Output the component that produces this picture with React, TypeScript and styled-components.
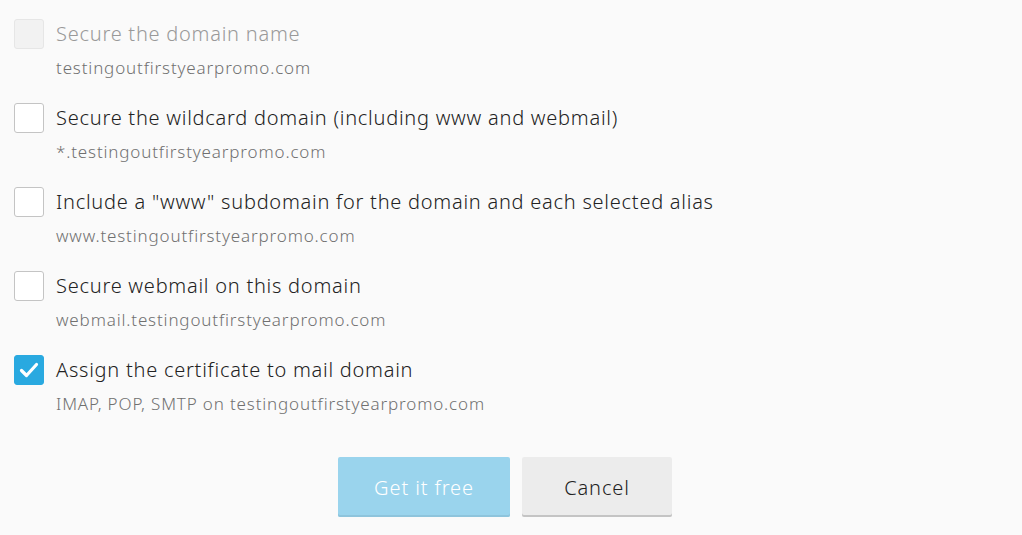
import React from "react";
import styled, { createGlobalStyle } from "styled-components";

const GlobalStyle = createGlobalStyle`
  html, body {
    margin: 0;
    padding: 0;
    background: #fafafa;
    font-family: "Noto Sans", "Open Sans", sans-serif;
  }
`;

const options = [
  {
    title: "Secure the domain name",
    hint: "testingoutfirstyearpromo.com",
    disabled: true,
    checked: false,
  },
  {
    title: "Secure the wildcard domain (including www and webmail)",
    hint: "*.testingoutfirstyearpromo.com",
    checked: false,
  },
  {
    title: 'Include a "www" subdomain for the domain and each selected alias',
    hint: "www.testingoutfirstyearpromo.com",
    checked: false,
  },
  {
    title: "Secure webmail on this domain",
    hint: "webmail.testingoutfirstyearpromo.com",
    checked: false,
  },
  {
    title: "Assign the certificate to mail domain",
    hint: "IMAP, POP, SMTP on testingoutfirstyearpromo.com",
    checked: true,
  },
];

export default function App() {
  return (
    <>
      <GlobalStyle />
      <Form>
        <List>
          {options.map((o) => (
            <Option key={o.title}>
              <Box $checked={o.checked} $disabled={o.disabled}>
                {o.checked && (
                  <svg width="22" height="18" viewBox="0 0 22 18">
                    <path
                      d="M3.5 9.5 L8.5 14.5 L18.5 3.5"
                      fill="none"
                      stroke="#fff"
                      strokeWidth="3.2"
                      strokeLinecap="round"
                      strokeLinejoin="round"
                    />
                  </svg>
                )}
              </Box>
              <Texts>
                <Title $disabled={o.disabled}>{o.title}</Title>
                <Hint>{o.hint}</Hint>
              </Texts>
            </Option>
          ))}
        </List>
        <Buttons>
          <Button $primary disabled>
            Get it free
          </Button>
          <Button>Cancel</Button>
        </Buttons>
      </Form>
    </>
  );
}

const Form = styled.div`
  padding: 19px 26px 0 14px;
`;

const List = styled.div`
  display: flex;
  flex-direction: column;
  gap: 23px;
`;

const Option = styled.label`
  display: grid;
  grid-template-columns: 30px 1fr;
  column-gap: 12px;
  align-items: start;
`;

const Box = styled.span<{ $checked?: boolean; $disabled?: boolean }>`
  box-sizing: border-box;
  width: 30px;
  height: 30px;
  border-radius: 3px;
  display: flex;
  align-items: center;
  justify-content: center;
  border: 1px solid
    ${(p) => (p.$checked ? "#29a9e0" : p.$disabled ? "#e6e6e6" : "#c4c4c4")};
  background: ${(p) =>
    p.$checked ? "#29a9e0" : p.$disabled ? "#f2f2f2" : "#fff"};
`;

const Texts = styled.div`
  display: flex;
  flex-direction: column;
  gap: 7px;
`;

const Title = styled.div<{ $disabled?: boolean }>`
  font-size: 20px;
  font-weight: 300;
  letter-spacing: 0.75px;
  line-height: 30px;
  color: ${(p) => (p.$disabled ? "#999" : "#222")};
`;

const Hint = styled.div`
  font-size: 17px;
  font-weight: 300;
  letter-spacing: 0.85px;
  line-height: 24px;
  color: #707070;
`;

const Buttons = styled.div`
  display: flex;
  justify-content: center;
  gap: 12px;
  margin-top: 41px;
`;

const Button = styled.button<{ $primary?: boolean }>`
  box-sizing: border-box;
  height: 60px;
  padding: 0 0;
  width: ${(p) => (p.$primary ? "172px" : "150px")};
  border: none;
  border-radius: 2px;
  font-family: inherit;
  font-size: 20px;
  font-weight: 300;
  letter-spacing: 0.9px;
  color: ${(p) => (p.$primary ? "#fff" : "#222")};
  background: ${(p) => (p.$primary ? "#9ad4ed" : "#ececec")};
  box-shadow: inset 0 -2px 0 ${(p) => (p.$primary ? "#8ec4dc" : "#c4c4c4")};
`;
